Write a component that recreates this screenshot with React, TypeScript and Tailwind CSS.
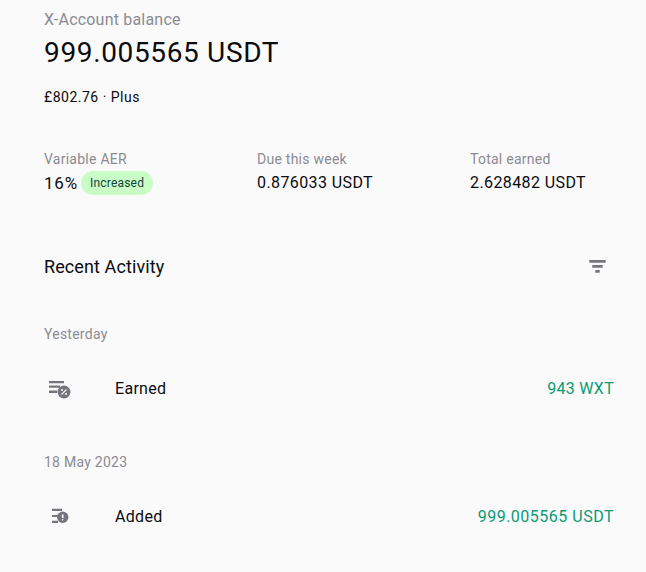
const FONT = "font-['Roboto',sans-serif]";

function EarnedIcon() {
  return (
    <svg width="24" height="24" viewBox="0 0 24 24" className="overflow-visible text-[#75757e]">
      <path d="M5 5h15v2.200H5zM5 9.500h11v2.200H5zM5 14.500h8v2.400H5z" fill="currentColor" />
      <circle cx="20" cy="16" r="6.500" fill="currentColor" />
      <path d="M17.500 18.500l5-5" stroke="#fff" strokeWidth="1.100" />
      <circle cx="18" cy="14" r="1" fill="#fff" />
      <circle cx="22" cy="18" r="1" fill="#fff" />
    </svg>
  );
}

function AddedIcon() {
  return (
    <svg width="24" height="24" viewBox="0 0 24 24" className="overflow-visible text-[#75757e]">
      <path d="M8 4.700h10V7H8zM8 11h6v2H8zM8 16.700h6V19H8z" fill="currentColor" />
      <circle cx="18.700" cy="13.300" r="5.700" fill="currentColor" />
      <path d="M18.700 10.500v3.500" stroke="#fff" strokeWidth="1.700" />
      <circle cx="18.700" cy="15.800" r=".8" fill="#fff" />
    </svg>
  );
}

function Stat({ label, value }: { label: string; value: React.ReactNode }) {
  return (
    <div>
      <div className="text-sm leading-5 tracking-[0.25px] text-[#8b8b93]">{label}</div>
      <div className="mt-[1px] text-base leading-6 tracking-[0.4px] text-[#0b0b0f]">{value}</div>
    </div>
  );
}

function Row({ icon, title, amount }: { icon: React.ReactNode; title: string; amount: React.ReactNode }) {
  return (
    <div className="flex h-6 items-center">
      <div className="flex w-[71px] shrink-0">{icon}</div>
      <div className="flex-1 pt-[2px] text-base tracking-[0.3px] text-[#0b0b0f]">{title}</div>
      <div className="pt-[2px] text-base text-[#0b9b76]">{amount}</div>
    </div>
  );
}

export default function App() {
  return (
    <div className={`${FONT} h-[572px] overflow-hidden bg-[#fafafa] pl-11 pr-8 pt-[10px]`}>
      <div className="text-base leading-5 tracking-[0.2px] text-[#8b8b93]">X-Account balance</div>
      <div className="mt-[5px] text-[28px] leading-9 tracking-[0.65px] text-[#0b0b0f]">999.005565 USDT</div>
      <div className="mt-[16px] text-sm leading-5 tracking-[0.5px] text-[#0b0b0f]">£802.76 · Plus</div>

      <div className="mt-[42px] grid grid-cols-[213px_213px_1fr]">
        <Stat
          label="Variable AER"
          value={
            <span className="flex items-center gap-[3px]">
              <span className="pt-[1px] text-[17px] leading-6 tracking-[0.8px]">16%</span>
              <span className="rounded-full bg-[#c9fdc5] px-[9px] text-xs leading-6 tracking-[0.2px] text-[#12443a]">Increased</span>
            </span>
          }
        />
        <Stat label="Due this week" value={<span className="block pt-[1px]">0.876033 USDT</span>} />
        <Stat label="Total earned" value={<span className="block pt-[1px]">2.628482 USDT</span>} />
      </div>

      <div className="mt-[58px] flex items-center justify-between">
        <div className="text-lg leading-7 tracking-[0.1px] text-[#0b0b0f]">Recent Activity</div>
        <svg width="24" height="24" viewBox="0 0 24 24" className="mr-[4px] text-[#75757e]">
          <path d="M3.300 5h16.400v2.700H3.300zM6.300 10h10.400v2.700H6.300zM9.300 15h4.400v2.700H9.300z" fill="currentColor" />
        </svg>
      </div>

      <div className="mt-[43px] text-sm leading-5 tracking-[0.25px] text-[#8b8b93]">Yesterday</div>
      <div className="mt-[32px]">
        <Row icon={<EarnedIcon />} title="Earned" amount={<span className="tracking-[0.3px]">943 WXT</span>} />
      </div>

      <div className="mt-[52px] text-sm leading-5 tracking-[0.25px] text-[#8b8b93]">18 May 2023</div>
      <div className="mt-[32px]">
        <Row icon={<AddedIcon />} title="Added" amount={<span className="tracking-[0.5px]">999.005565 USDT</span>} />
      </div>
    </div>
  );
}
